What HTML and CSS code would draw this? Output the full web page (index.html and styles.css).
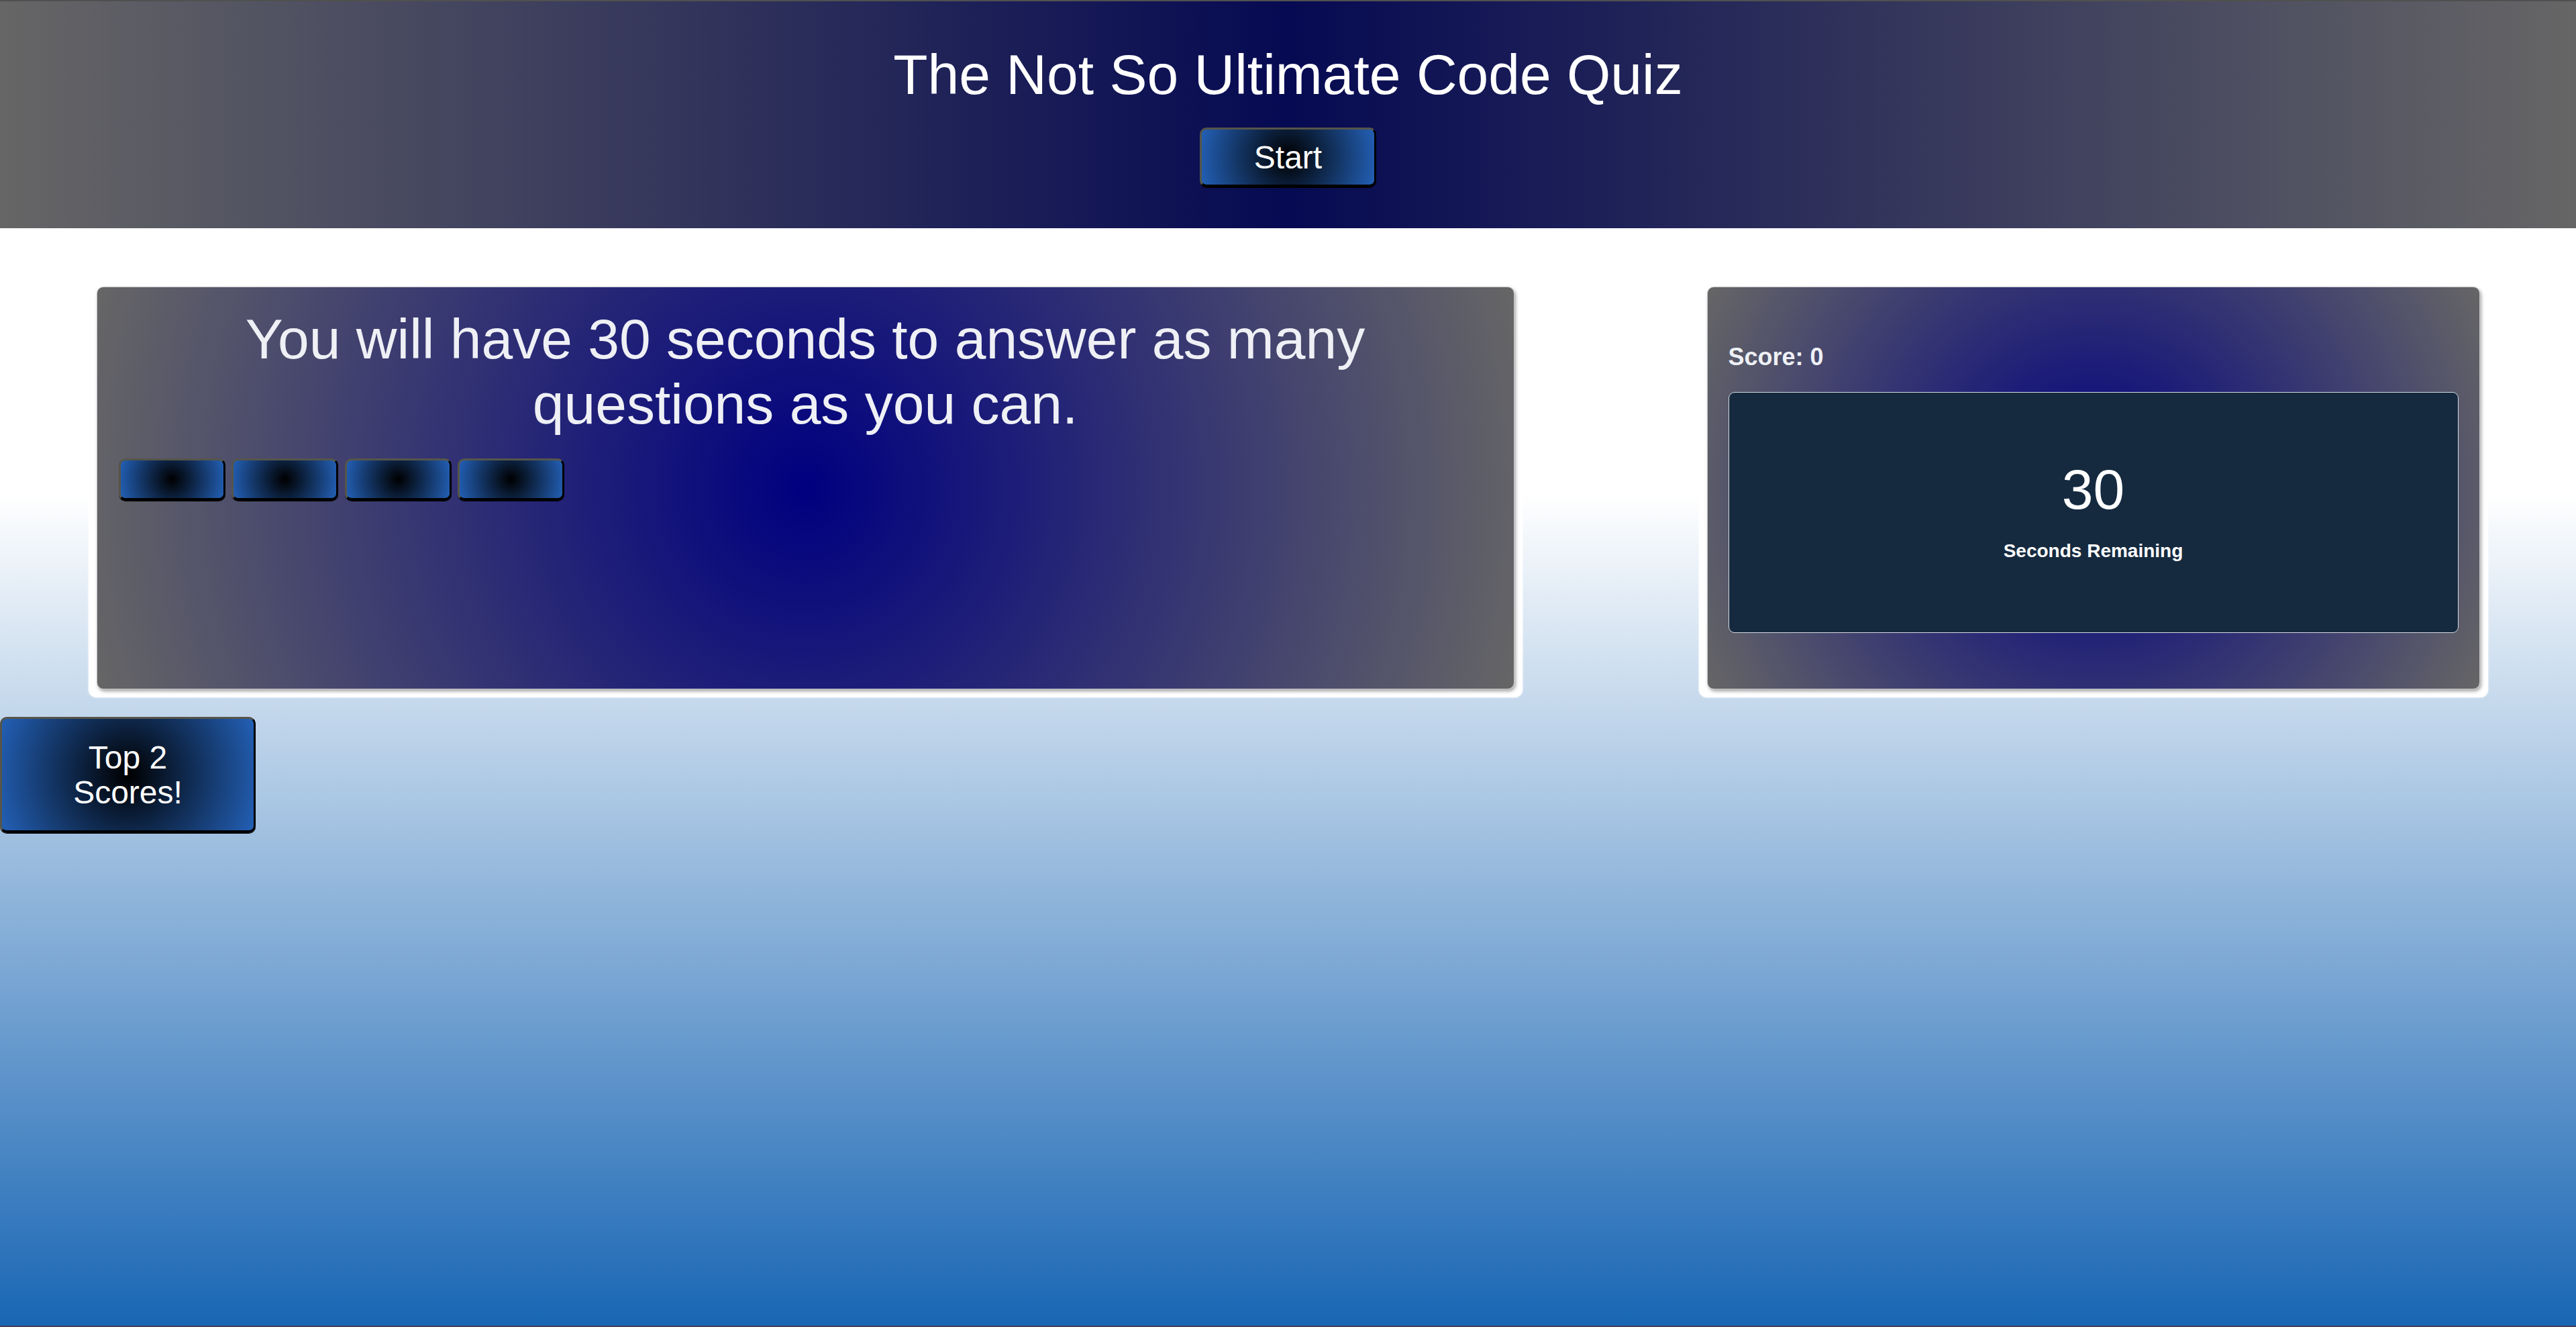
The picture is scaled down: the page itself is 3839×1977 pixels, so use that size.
FILE: index.html
```html
<!DOCTYPE html>
<html lang="en">
<head>
<meta charset="utf-8">
<title>The Not So Ultimate Code Quiz</title>
<link rel="stylesheet" href="styles.css">
</head>
<body>
<div class="page">
  <header class="top">
    <h1 class="title">The Not So Ultimate Code Quiz</h1>
    <button class="btn btn-start">Start</button>
  </header>

  <main class="board">
    <div class="frame">
      <section class="card card-quiz">
        <h2 class="question">You will have 30 seconds to answer as many questions as you can.</h2>
        <div class="answers">
          <button class="btn btn-answer"></button>
          <button class="btn btn-answer"></button>
          <button class="btn btn-answer"></button>
          <button class="btn btn-answer"></button>
        </div>
      </section>
    </div>

    <div class="frame">
      <section class="card card-stats">
        <p class="score">Score: 0</p>
        <div class="timer">
          <span class="timer-value">30</span>
          <span class="timer-label">Seconds Remaining</span>
        </div>
      </section>
    </div>
  </main>

  <button class="btn btn-scores">Top 2 Scores!</button>
</div>
</body>
</html>
```

FILE: styles.css
```css
html, body {
  margin: 0;
  padding: 0;
}

body {
  font-family: "Liberation Sans", Arial, sans-serif;
}

.page {
  min-height: 100vh;
  box-sizing: border-box;
  border-bottom: 2px solid #463f5a;
  background: linear-gradient(to bottom, #ffffff 0, #ffffff 735px, #1966b4 100%);
}

/* ---------- header ---------- */
.top {
  display: flex;
  flex-direction: column;
  align-items: center;
  padding: 61px 0 61px;
  border-top: 2px solid #505050;
  background: linear-gradient(to right, #666666 0%, #060a52 50%, #666666 100%);
}

.title {
  margin: 0 0 29.5px;
  font-size: 84px;
  font-weight: normal;
  line-height: normal;
  color: #ffffff;
}

/* ---------- buttons ---------- */
.btn {
  font-family: inherit;
  color: #ffffff;
  cursor: pointer;
  border-style: solid;
  border-width: 3px 3px 4px 3px;
  border-color: #56554a #000000 #000000 #56554a;
  border-radius: 10px;
  background: radial-gradient(circle, #000000, #2360b6);
  box-shadow: 0 1px 0 #000000;
}

.btn-start {
  font-size: 48px;
  line-height: 55px;
  padding: 14px 78px 13px;
}

.btn-answer {
  width: 159px;
  height: 63px;
  padding: 0;
}

.btn-scores {
  display: block;
  width: 381px;
  margin-top: 29px;
  padding: 32px 78px 30px;
  font-size: 48px;
  line-height: 52px;
  text-align: center;
}

/* ---------- board ---------- */
.board {
  display: flex;
  justify-content: space-around;
  margin-top: 75px;
}

.frame {
  padding: 12px;
  background: #ffffff;
  border-radius: 12px;
  box-shadow: 0 0 3px #ffffff;
}

.card {
  box-sizing: border-box;
  height: 600px;
  border: 1px solid #c9c9cc;
  border-radius: 10px;
  box-shadow: 2px 3px 5px rgba(0, 0, 0, 0.35);
  background: radial-gradient(circle, #000080, #666666);
}

.card-quiz {
  width: 2113px;
  padding: 29px 32px 0;
}

.question {
  margin: 0;
  padding: 0 100px;
  font-size: 84px;
  font-weight: normal;
  line-height: normal;
  text-align: center;
  color: #eef0f5;
}

.answers {
  display: flex;
  gap: 9.5px;
  margin-top: 32px;
}

.card-stats {
  width: 1152px;
  padding: 0 31px;
}

.score {
  margin: 83px 0 31px;
  font-size: 36px;
  font-weight: bold;
  line-height: normal;
  color: #eef0f5;
}

.timer {
  box-sizing: border-box;
  height: 359px;
  padding-top: 96px;
  display: flex;
  flex-direction: column;
  align-items: center;
  border: 1px solid #d6dae2;
  border-radius: 9px;
  background: #152a3f;
  color: #ffffff;
}

.timer-value {
  font-size: 84px;
  line-height: normal;
}

.timer-label {
  margin-top: 27.5px;
  font-size: 28px;
  font-weight: bold;
  line-height: normal;
}
```
